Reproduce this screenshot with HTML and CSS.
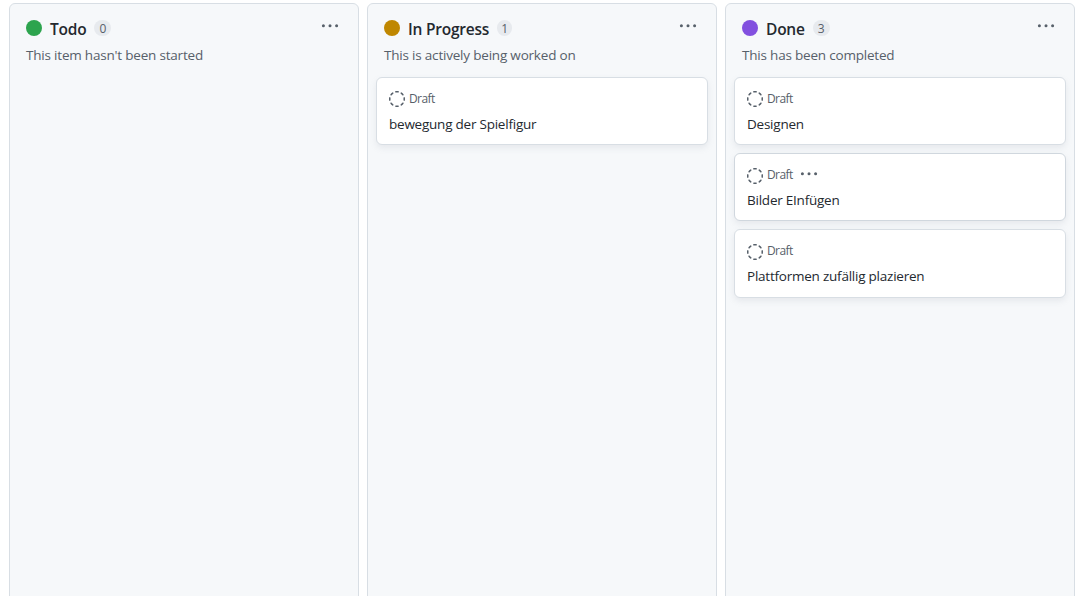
FILE: index.html
```html
<!DOCTYPE html>
<html lang="en">
<head>
<meta charset="utf-8">
<title>Board</title>
<link rel="stylesheet" href="styles.css">
</head>
<body>
<svg class="defs" width="0" height="0">
  <symbol id="draft" viewBox="0 0 16 16"><circle cx="8" cy="8" r="7.25" pathLength="80" fill="none" stroke="currentColor" stroke-width="1.5" stroke-linecap="round" stroke-dasharray="4.1 5.9" stroke-dashoffset="2.05" transform="rotate(-90 8 8)"/></symbol>
  <symbol id="kebab" viewBox="0 0 18 4"><circle cx="2.4" cy="1.7" r="1.5"/><circle cx="9" cy="1.7" r="1.5"/><circle cx="15.6" cy="1.7" r="1.5"/></symbol>
</svg>
<main class="board">
  <section class="column">
    <header class="head"><span class="dot green"></span><h2>Todo</h2><span class="count">0</span><svg class="kebab"><use href="#kebab"/></svg></header>
    <p class="desc">This item hasn't been started</p>
  </section>
  <section class="column">
    <header class="head"><span class="dot yellow"></span><h2>In Progress</h2><span class="count narrow">1</span><svg class="kebab"><use href="#kebab"/></svg></header>
    <p class="desc">This is actively being worked on</p>
    <div class="cards">
      <article class="card"><div class="meta"><svg class="draft"><use href="#draft"/></svg><span class="label">Draft</span></div><p class="title">bewegung der Spielfigur</p></article>
    </div>
  </section>
  <section class="column">
    <header class="head"><span class="dot purple"></span><h2>Done</h2><span class="count">3</span><svg class="kebab"><use href="#kebab"/></svg></header>
    <p class="desc">This has been completed</p>
    <div class="cards">
      <article class="card"><div class="meta"><svg class="draft"><use href="#draft"/></svg><span class="label">Draft</span></div><p class="title">Designen</p></article>
      <article class="card hover"><div class="meta"><svg class="draft"><use href="#draft"/></svg><span class="label">Draft</span><svg class="kebab small"><use href="#kebab"/></svg></div><p class="title">Bilder EInfügen</p></article>
      <article class="card tall"><div class="meta"><svg class="draft"><use href="#draft"/></svg><span class="label">Draft</span></div><p class="title">Plattformen zufällig plazieren</p></article>
    </div>
  </section>
</main>
</body>
</html>
```
FILE: styles.css
```css
* { box-sizing: border-box; }
body { margin: 0; height: 596px; overflow: hidden; background: #fff; color: #24292f; font-family: "Segoe UI", "Open Sans", "Noto Sans", sans-serif; }
h2, p { margin: 0; white-space: nowrap; }
.defs { display: block; }
.board { display: flex; gap: 8px; padding: 3px 0 0 9px; height: 610px; }
.column { flex: 0 0 350px; border: 1px solid #d8dee4; border-radius: 6px; background: #f6f8fa; }
.head { display: flex; align-items: flex-start; height: 40px; padding: 16px 19px 0 16px; }
.dot { width: 16px; height: 16px; border-radius: 50%; margin-right: 8px; }
.green { background: #2da44e; }
.yellow { background: #bf8700; }
.purple { background: #8250df; }
h2 { font-size: 15.5px; font-weight: 600; line-height: 18px; letter-spacing: -0.23px; }
.count { width: 17px; height: 16px; margin-left: 8px; border-radius: 8px; background: #e7eaee; color: #57606a; font-size: 12px; line-height: 17px; text-align: center; }
.narrow { width: 15px; }
.kebab { width: 18px; height: 4px; margin: 4px 0 0 auto; fill: #57606a; }
.desc { padding-left: 16px; font-size: 13.5px; line-height: 22px; color: #57606a; letter-spacing: -0.2px; }
.cards { display: flex; flex-direction: column; gap: 8px; padding: 11px 8px 0; }
.card { height: 68px; border: 1px solid #d8dee4; border-radius: 6px; background: #fff; padding: 13px 12px 0; box-shadow: 0 3px 6px rgba(140, 149, 159, .15); }
.card.tall { height: 69px; }
.hover { border-color: #d0d7de; }
.meta { display: flex; height: 22px; color: #57606a; }
.draft { width: 16px; height: 16px; margin-right: 4px; }
.card + .card .draft { margin-top: 1px; }
.label { font-size: 12px; line-height: 16px; letter-spacing: -0.6px; }
.small { margin: 5px 0 0 7px; }
.title { font-size: 13.5px; line-height: 22px; letter-spacing: -0.23px; }
```
